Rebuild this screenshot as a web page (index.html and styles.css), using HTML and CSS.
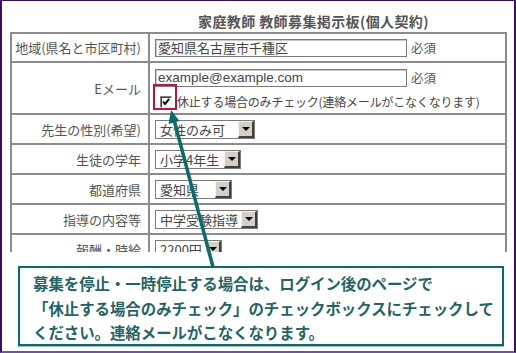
FILE: index.html
```html
<!DOCTYPE html>
<html lang="ja">
<head>
<meta charset="utf-8">
<link rel="stylesheet" href="styles.css">
</head>
<body>
<div class="frame">
  <h1 class="title">家庭教師 教師募集掲示板(個人契約)</h1>
  <div class="clip">
    <div class="form">
      <div class="lbl">地域(県名と市区町村)</div>
      <div class="fld">
        <span class="input">愛知県名古屋市千種区</span><span class="req">必須</span>
      </div>

      <div class="lbl">Eメール</div>
      <div class="fld stack">
        <div class="line"><span class="input latin">example@example.com</span><span class="req">必須</span></div>
        <div class="check-line">
          <span class="checkbox"><svg viewBox="0 0 10 10" width="10" height="10"><path d="M2 4.5 L4 7 L8.2 1.8" fill="none" stroke="#000" stroke-width="2"/></svg></span>
          <span class="check-text">休止する場合のみチェック(連絡メールがこなくなります)</span>
        </div>
      </div>

      <div class="lbl">先生の性別(希望)</div>
      <div class="fld"><span class="select s100"><span class="sel-text">女性のみ可</span><span class="sel-btn"></span></span></div>

      <div class="lbl">生徒の学年</div>
      <div class="fld"><span class="select s86"><span class="sel-text">小学4年生</span><span class="sel-btn"></span></span></div>

      <div class="lbl">都道府県</div>
      <div class="fld"><span class="select s77"><span class="sel-text">愛知県</span><span class="sel-btn"></span></span></div>

      <div class="lbl">指導の内容等</div>
      <div class="fld"><span class="select s103"><span class="sel-text">中学受験指導</span><span class="sel-btn"></span></span></div>

      <div class="lbl">報酬・時給</div>
      <div class="fld"><span class="select s67"><span class="sel-text">2200円</span><span class="sel-btn"></span></span></div>
    </div>
  </div>

  <div class="callout">
    <p>募集を停止・一時停止する場合は、ログイン後のページで</p>
    <p>「休止する場合のみチェック」のチェックボックスにチェックして</p>
    <p>ください。連絡メールがこなくなります。</p>
  </div>

  <div class="mark"></div>
  <svg class="arrow" width="516" height="353" viewBox="0 0 516 353">
    <line x1="213" y1="267" x2="173.8" y2="119" stroke="#0c6b68" stroke-width="3.5"/>
    <polygon points="171,110 179.5,121 168.5,124" fill="#0c6b68"/>
  </svg>
</div>
</body>
</html>
```

FILE: styles.css
```css
html, body {
  margin: 0;
  padding: 0;
  background: #fff;
}

.frame {
  position: relative;
  width: 516px;
  height: 353px;
  box-sizing: border-box;
  border-top: 1px solid #3a0d66;
  border-left: 2px solid #3a0d66;
  border-right: 2px solid #3a0d66;
  border-bottom: 2px solid #6f52a0;
  padding-left: 8px;
  overflow: hidden;
  font-family: "Noto Sans CJK JP", sans-serif;
}

.title {
  margin: 0 0 2px 0;
  padding: 11px 0 0 188px;
  font-size: 14px;
  line-height: 18px;
  letter-spacing: 0.4px;
  font-weight: bold;
  color: #555;
  white-space: nowrap;
}

.clip {
  height: 220px;
  overflow: hidden;
}

.form {
  width: 497px;
  box-sizing: border-box;
  display: grid;
  grid-template-columns: 136px 355px;
  grid-template-rows: 27px 50px 28px 28px 28px 28px 28px;
  gap: 2px;
  padding: 2px;
  background: #8c8c8c;
}

.lbl, .fld {
  background: #fff;
}

.lbl {
  display: flex;
  align-items: center;
  justify-content: flex-end;
  padding-right: 7px;
  font-size: 13px;
  color: #555;
  white-space: nowrap;
}

.fld {
  display: flex;
  align-items: center;
  padding-left: 5px;
  font-size: 13px;
  color: #444;
}

.fld.stack {
  flex-direction: column;
  align-items: flex-start;
  justify-content: flex-start;
  padding-top: 5px;
}

.line {
  display: flex;
  align-items: center;
}

.input {
  display: flex;
  align-items: center;
  width: 252px;
  height: 18px;
  box-sizing: border-box;
  border: 1px solid #7a7a7a;
  box-shadow: inset 1px 1px 0 #c8c8c8;
  padding-left: 2px;
  font-size: 13px;
  color: #444;
  white-space: nowrap;
  overflow: hidden;
}

.input.latin {
  font-family: "Liberation Sans", Arial, sans-serif;
  font-size: 13.5px;
}

.req {
  margin-left: 4px;
  font-size: 12.5px;
  color: #555;
}

.check-line {
  display: flex;
  align-items: center;
  margin-top: 6px;
  margin-left: 5px;
}

.checkbox {
  display: flex;
  align-items: center;
  justify-content: center;
  width: 12px;
  height: 12px;
  box-sizing: border-box;
  border-top: 1px solid #808080;
  border-left: 1px solid #808080;
  border-right: 1px solid #e8e8e8;
  border-bottom: 1px solid #e8e8e8;
  box-shadow: inset 1px 1px 0 #404040;
  background: #fff;
}

.checkbox svg {
  display: block;
}

.check-text {
  margin-left: 5px;
  font-size: 12px;
  color: #444;
  letter-spacing: -0.2px;
  white-space: nowrap;
}

.select {
  display: flex;
  align-items: center;
  height: 19px;
  box-sizing: border-box;
  border: 1px solid #7a7a7a;
  background: #fff;
}

.s100 { width: 100px; }
.s86 { width: 86px; }
.s77 { width: 77px; }
.s103 { width: 103px; }
.s67 { width: 67px; }

.sel-text {
  flex: 1;
  padding-left: 4px;
  font-size: 13px;
  color: #444;
  white-space: nowrap;
  overflow: hidden;
}

.sel-btn {
  width: 16px;
  height: 17px;
  box-sizing: border-box;
  background: #d4d0c8;
  border-top: 1px solid #f4f4f4;
  border-left: 1px solid #f4f4f4;
  border-right: 2px solid #404040;
  border-bottom: 2px solid #404040;
  display: flex;
  align-items: center;
  justify-content: center;
}

.sel-btn::after {
  content: "";
  width: 0;
  height: 0;
  border-left: 4px solid transparent;
  border-right: 4px solid transparent;
  border-top: 4px solid #000;
}

.callout {
  width: 486px;
  box-sizing: border-box;
  margin: 14px 0 0 8px;
  padding: 3px 0 0 13px;
  height: 80px;
  border: 2px solid #0c6b68;
  box-shadow: 0 1px 0 #9cc0bf;
  background: #fff;
  color: #1f6466;
  font-size: 15.4px;
  font-weight: bold;
  line-height: 24.5px;
  white-space: nowrap;
}

.callout p {
  margin: 0;
}

.mark {
  position: absolute;
  left: 151px;
  top: 83px;
  width: 24px;
  height: 26px;
  box-sizing: border-box;
  border: 2px solid #c4123e;
}

.arrow {
  position: absolute;
  left: -2px;
  top: -1px;
  pointer-events: none;
}
```
